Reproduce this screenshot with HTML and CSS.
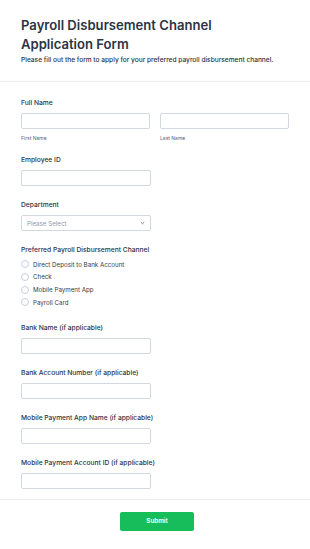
FILE: index.html
```html
<!DOCTYPE html>
<html lang="en">
<head>
    <meta charset="UTF-8">
    <meta name="viewport" content="width=device-width, initial-scale=1.0">
    <title>Payroll Disbursement Channel Application Form</title>
    <link rel="stylesheet" href="styles.css">
</head>
<body>
    <div class="form-header">
        <h1>Payroll Disbursement Channel Application Form</h1>
        <p>Please fill out the form to apply for your preferred payroll disbursement channel.</p>
    </div>

    <form class="form-body">
        <div class="form-group">
            <label class="form-label">Full Name</label>
            <div class="name-row">
                <div class="name-col">
                    <input type="text" class="form-input">
                    <span class="sublabel">First Name</span>
                </div>
                <div class="name-col">
                    <input type="text" class="form-input">
                    <span class="sublabel">Last Name</span>
                </div>
            </div>
        </div>

        <div class="form-group">
            <label class="form-label">Employee ID</label>
            <input type="text" class="form-input half">
        </div>

        <div class="form-group">
            <label class="form-label">Department</label>
            <div class="select-box half">
                <span>Please Select</span>
                <svg width="5" height="4" viewBox="0 0 5 4"><path d="M0.8 1.2 L2.5 2.8 L4.2 1.2" fill="none" stroke="#6f7a90" stroke-width="0.9"/></svg>
            </div>
        </div>

        <div class="form-group">
            <label class="form-label radio-title">Preferred Payroll Disbursement Channel</label>
            <div class="radio-row"><span class="radio"></span>Direct Deposit to Bank Account</div>
            <div class="radio-row"><span class="radio"></span>Check</div>
            <div class="radio-row"><span class="radio"></span>Mobile Payment App</div>
            <div class="radio-row"><span class="radio"></span>Payroll Card</div>
        </div>

        <div class="form-group">
            <label class="form-label">Bank Name (if applicable)</label>
            <input type="text" class="form-input half">
        </div>

        <div class="form-group">
            <label class="form-label">Bank Account Number (if applicable)</label>
            <input type="text" class="form-input half">
        </div>

        <div class="form-group">
            <label class="form-label">Mobile Payment App Name (if applicable)</label>
            <input type="text" class="form-input half">
        </div>

        <div class="form-group last">
            <label class="form-label">Mobile Payment Account ID (if applicable)</label>
            <input type="text" class="form-input half">
        </div>
    </form>

    <div class="form-footer">
        <button type="button">Submit</button>
    </div>
</body>
</html>
```

FILE: styles.css
```css
body {
    font-family: Inter, "Noto Sans", sans-serif;
    margin: 0;
    background-color: #fff;
    color: #2c3345;
}
.form-header {
    padding: 16px 21px 16px;
    border-bottom: 1px solid #eceef3;
}
.form-header h1 {
    margin: 0;
    font-size: 13.1px;
    line-height: 19px;
    font-weight: 600;
    width: 240px;
}
.form-header p {
    margin: 2px 0 0;
    font-size: 6.6px;
    line-height: 9px;
    font-weight: 500;
}
.form-body {
    padding: 16px 21px 10px;
    border-bottom: 1px solid #eceef3;
}
.form-group {
    margin-bottom: 14px;
}
.form-group.last {
    margin-bottom: 0;
}
.form-label {
    display: block;
    font-size: 6.7px;
    line-height: 10px;
    font-weight: 500;
    margin-bottom: 5px;
}
.form-label.radio-title {
    margin-bottom: 3px;
}
.form-input {
    display: block;
    width: 100%;
    height: 16px;
    border: 1px solid #d3d7e0;
    border-radius: 2px;
    box-sizing: border-box;
    margin: 0;
    padding: 0 5px;
    background: #fff;
}
.form-input.half,
.select-box.half {
    width: 130px;
}
.name-row {
    display: flex;
    gap: 10px;
}
.name-col {
    flex: 1;
}
.sublabel {
    display: block;
    margin-top: 6px;
    font-size: 5px;
    line-height: 6px;
    color: #57647e;
}
.select-box {
    display: flex;
    align-items: center;
    justify-content: space-between;
    height: 16px;
    border: 1px solid #d3d7e0;
    border-radius: 2px;
    box-sizing: border-box;
    padding: 0 5px 0 5px;
    font-size: 6.2px;
    color: #8f98ad;
}
.radio-row {
    display: flex;
    align-items: center;
    height: 12.67px;
    font-size: 6.2px;
    color: #343c4f;
}
.radio {
    width: 8px;
    height: 8px;
    border: 1px solid #c8cedb;
    border-radius: 50%;
    box-sizing: border-box;
    margin-right: 4px;
}
.form-footer {
    display: flex;
    justify-content: center;
    padding: 12px 0 0 4px;
}
.form-footer button {
    width: 74px;
    height: 19px;
    border: none;
    border-radius: 2px;
    background-color: #18bd5b;
    color: #fff;
    font-family: Inter, sans-serif;
    font-size: 6.3px;
    font-weight: 600;
    cursor: pointer;
}
```
